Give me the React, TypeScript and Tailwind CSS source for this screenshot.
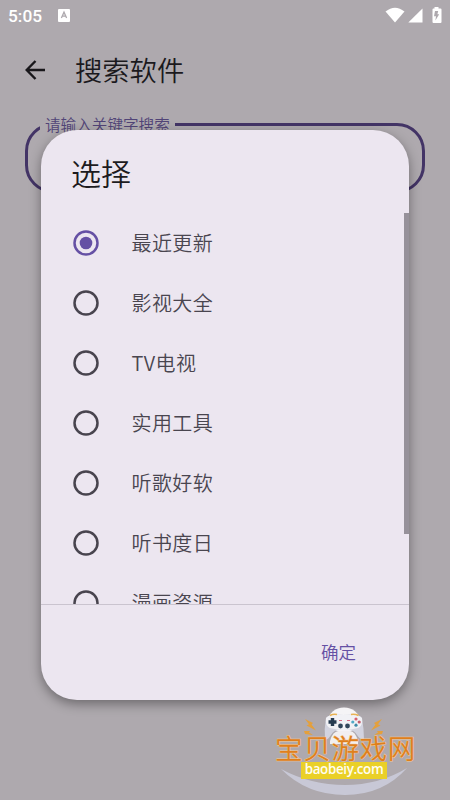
import React, { useState } from 'react';

const options = [
  '最近更新',
  '影视大全',
  'TV电视',
  '实用工具',
  '听歌好软',
  '听书度日',
  '漫画资源',
];

const StatusBar: React.FC = () => (
  <div className="flex h-[30px] items-center justify-between pl-2 pr-[8px]">
    <div className="flex items-center">
      <span className="w-[50px] pt-px font-[Roboto] text-[17.3px] leading-[30px] font-medium text-white">5:05</span>
      <svg className="h-[13px] w-[12px]" viewBox="0 0 12 13">
        <rect width="12" height="13" rx="1" fill="#fff" />
        <path d="M3.4 9 6 3.2 8.6 9M4.3 7.2h3.4" fill="none" stroke="#aea9ae" strokeWidth="1.3" />
      </svg>
    </div>
    <svg className="h-[17px] w-[57px]" viewBox="0 0 57 17" fill="#fff">
      <path d="M0.5 4.6Q10 -3.2 19.5 4.6L10 15.6Z" />
      <path d="M37.5 1.6V15.6H23.3Z" />
      <path d="M49.5 0h4v1.600h2q1 0 1 1V14.900q0 1-1 1h-7q-1 0-1-1V2.600q0-1 1-1h1Z" />
      <path d="M50 4h3.200l-.8 3.200h1.800l-3.800 6.300.6-4.300h-2Z" fill="#aea9ae" />
    </svg>
  </div>
);

const Radio: React.FC<{ checked: boolean }> = ({ checked }) => (
  <svg
    className={checked ? 'h-[26px] w-[26px] text-[#6550a4]' : 'h-[26px] w-[26px] text-[#48444e]'}
    viewBox="0 0 26 26"
  >
    <circle cx="13" cy="13" r="11.500" fill="none" stroke="currentColor" strokeWidth="2.500" />
    {checked && <circle cx="13" cy="13" r="6.300" fill="currentColor" />}
  </svg>
);

const SiteLogo: React.FC = () => (
  <div className="absolute top-[695px] left-[265px] h-[105px] w-[160px]">
    <svg className="absolute inset-0 h-full w-full" viewBox="0 0 160 105">
      <path d="M16 79Q46 95 80 95T142 78Q118 105 80 105T16 79Z" fill="#c8c8d6" transform="translate(0 -5)" />
      <ellipse cx="79" cy="25" rx="15.500" ry="12.500" fill="#f5f4f6" />
      <path d="M61 23Q65 18 78.500 20Q93 18 97 23Q99 34 99 45Q96 46 92 40Q89 35 84 35H74Q69 35 66 40Q62 46 60 44Q59 34 61 23Z" fill="#d2d3df" />
      <path d="M61 23Q65 18 78.500 20Q93 18 97 23Q98 31 93 33Q79 37 65 33Q60 31 61 23Z" fill="#f1f1f5" />
      <path d="M65 46Q68 35 75 36H84Q90 35 93 46V49H65Z" fill="#f2eff0" />
      <path d="M65 20.500Q68 18.800 72 19.500M86 19.500Q90 18.800 93.500 20.500" fill="none" stroke="#e8b252" strokeWidth="1.600" />
      <path d="M67.500 23v8M63.500 27h8" stroke="#263b50" strokeWidth="3.400" />
      <circle cx="91" cy="24" r="1.600" fill="#d66070" />
      <circle cx="87.800" cy="27" r="1.600" fill="#50a9c6" />
      <circle cx="94.200" cy="27" r="1.600" fill="#c45b69" />
      <circle cx="91" cy="30.200" r="1.600" fill="#3e8ba7" />
      <path d="M74 25.500h3M82 25.500h3" stroke="#d86e86" strokeWidth="1.200" />
      <circle cx="75.500" cy="31" r="2.400" fill="#31465b" />
      <circle cx="82.500" cy="31" r="2.400" fill="#31465b" />
      <path d="M40 24 48 28 46.500 29.500 51 35.500 41.500 30.500 44 29.300Z" fill="#e4a03c" />
      <path d="M117 24 109 28 110.500 29.500 106 35.500 115.500 30.500 113 29.300Z" fill="#e4a03c" />
      <path d="M39 36h6l-1 1.500 4 2.500-8-1ZM118 36h-6l1 1.500-4 2.500 8-1Z" fill="#e4a03c" />
    </svg>
    <div className="relative pt-[38px] pl-[10px]">
      <div className="h-[29px] text-[27.500px] leading-[29px] font-[350] tracking-[0.700px] whitespace-nowrap text-[#df7f1c] [paint-order:stroke] [-webkit-text-stroke:1px_#f2c894]">
        宝贝游戏网
      </div>
      <div className="ml-[26px] flex h-[16.500px] w-[86px] items-center justify-center bg-[#ead027] pb-[2px] font-['Open_Sans',sans-serif] text-[13.400px] leading-[14px] font-semibold tracking-[-0.350px] text-[#fffdf0]">
        baobeiy.com
      </div>
    </div>
  </div>
);

const App: React.FC = () => {
  const [selected, setSelected] = useState(options[0]);

  return (
    <div className="relative h-[800px] w-[450px] overflow-hidden bg-[#aea9ae] font-['Noto_Sans_CJK_SC',sans-serif]">
      <StatusBar />
      <div className="flex h-20 items-center pl-[25px]">
        <svg className="h-5 w-5" viewBox="0 0 20 20" fill="none" stroke="#19171b" strokeWidth="2.4">
          <path d="M20 10H2M10.500 1 1.700 10l8.800 9" />
        </svg>
        <h1 className="ml-[30px] pb-0.5 text-[27.300px] font-[350] text-[#1b191d]">搜索软件</h1>
      </div>
      <fieldset className="mx-[25px] mt-[3px] h-[80px] rounded-[28px] border-3 border-[#433466] pl-[12px]">
        <legend className="px-[5px] text-[15.600px] leading-[22px] font-[350] text-[#514477]">请输入关键字搜索</legend>
      </fieldset>

      <div className="absolute top-[130px] left-[41px] flex h-[570px] w-[368px] flex-col overflow-hidden rounded-[36px] bg-[#ece6f0] shadow-[0_4px_12px_rgba(0,0,0,0.38)]">
        <h2 className="h-[83px] shrink-0 pl-[30px] text-[30px] leading-[85px] font-[350] text-[#1d1b20]">选择</h2>
        <div className="flex h-[391px] shrink-0 justify-between overflow-hidden">
          <div>
            {options.map((option) => (
              <div
                key={option}
                className="flex h-[60px] cursor-pointer items-center pl-8"
                onClick={() => setSelected(option)}
              >
                <Radio checked={option === selected} />
                <span className="ml-[32.500px] text-[20px] font-[350] tracking-[0.400px] text-[#49454f]">{option}</span>
              </div>
            ))}
          </div>
          <div className="h-[321px] w-[5px] bg-[#96919a]" />
        </div>
        <div className="flex flex-1 items-center justify-end border-t border-[#cac4cf] pr-[53px]">
          <button className="text-[17.500px] font-[350] text-[#6550a4]">确定</button>
        </div>
      </div>
      <SiteLogo />
    </div>
  );
};

export default App;
